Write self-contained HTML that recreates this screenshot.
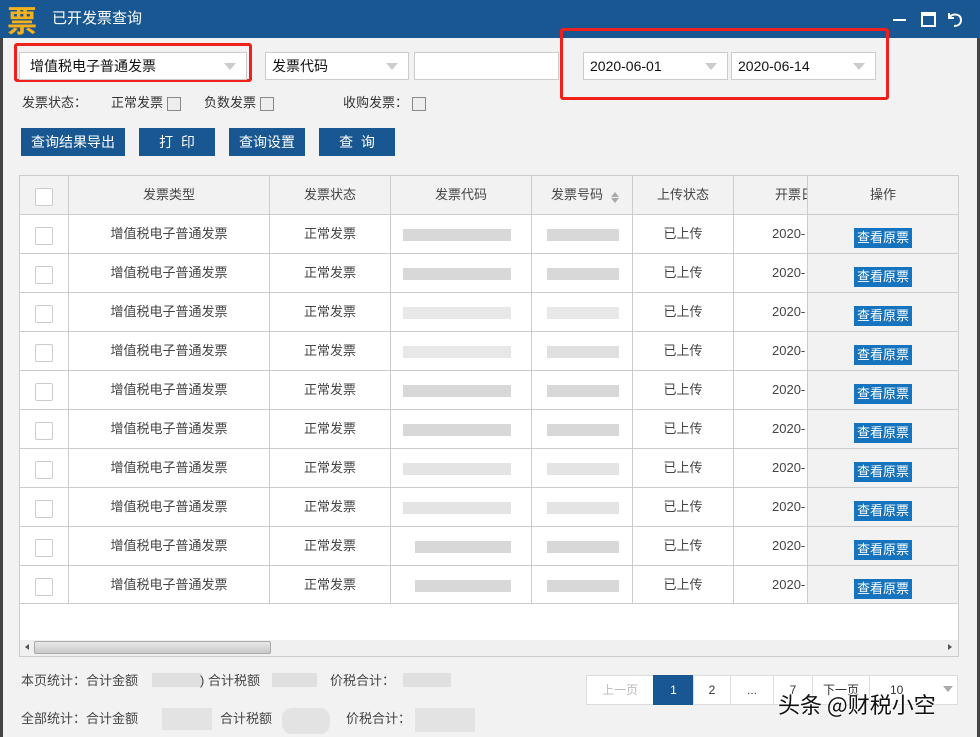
<!DOCTYPE html>
<html><head><meta charset="utf-8"><style>
*{margin:0;padding:0;box-sizing:border-box}
body{width:980px;height:737px;overflow:hidden;background:#f2f2f2;font-family:"Liberation Sans","Noto Sans CJK SC",sans-serif;font-size:13px;line-height:16px;color:#333;position:relative}
.a{position:absolute;white-space:nowrap}
.title{left:0;top:0;width:980px;height:38px;background:#185791}
.sel{background:#fff;border:1px solid #ccc;height:28px;font-size:14px;color:#111;padding-left:10px;line-height:26px}
.tri{position:absolute;right:10px;top:10px;width:0;height:0;border-left:6px solid transparent;border-right:6px solid transparent;border-top:7px solid #ccc}
.red{border:3px solid #f0201a;border-radius:3px}
.btn{background:#185791;color:#fff;height:28px;line-height:28px;text-align:center;font-size:14px}
.cb{width:14px;height:14px;border:1px solid #888;background:#eee}
.hl{background:#ccc}
.cell{text-align:center;font-size:13px;color:#444;line-height:16px}
.bl{background:#d8d8d8}
.vb{background:#1673bd;color:#fff;font-size:13px;width:58px;height:20px;line-height:20px;text-align:center}
.pg{background:#fff;border:1px solid #ddd;height:30px;line-height:28px;text-align:center;font-size:12px;color:#333}
.ck{width:18px;height:18px;border:1px solid #ccc;border-radius:2px;background:#fff}
</style></head><body>
<div class="a" style="left:0;top:0;width:3px;height:737px;background:#444"></div>
<div class="a" style="right:0;top:0;width:3px;height:737px;background:#444"></div>
<div class="a title"></div>
<div class="a" style="left:7px;top:1px;font-size:30px;font-weight:bold;color:#f5b01a;line-height:36px;font-family:'Noto Sans CJK SC',sans-serif">票</div>
<div class="a" style="left:52px;top:11px;color:#fff;font-size:15px">已开发票查询</div>
<div class="a" style="left:893px;top:19px;width:13px;height:2px;background:#fff"></div>
<div class="a" style="left:921px;top:12px;width:15px;height:15px;border:2px solid #fff;border-top-width:4px"></div>
<svg class="a" style="left:945px;top:9px" width="20" height="20" viewBox="0 0 20 20"><path d="M4 4v5h5M4 9C6 4 16 4 16 11c0 4-3 6-7 6" fill="none" stroke="#fff" stroke-width="2"/></svg>

<div class="a red" style="left:14px;top:43px;width:238px;height:39px"></div>
<div class="a sel" style="left:19px;top:52px;width:228px">增值税电子普通发票<span class="tri"></span></div>
<div class="a sel" style="left:265px;top:52px;width:144px;padding-left:6px">发票代码<span class="tri"></span></div>
<div class="a sel" style="left:414px;top:52px;width:145px"></div>
<div class="a red" style="left:560px;top:28px;width:329px;height:72px"></div>
<div class="a sel" style="left:583px;top:52px;width:145px;padding-left:6px">2020-06-01<span class="tri"></span></div>
<div class="a sel" style="left:731px;top:52px;width:145px;padding-left:6px">2020-06-14<span class="tri"></span></div>

<div class="a" style="left:22px;top:95px">发票状态：</div>
<div class="a" style="left:111px;top:95px">正常发票</div><div class="a cb" style="left:167px;top:97px"></div>
<div class="a" style="left:204px;top:95px">负数发票</div><div class="a cb" style="left:260px;top:97px"></div>
<div class="a" style="left:343px;top:95px">收购发票：</div><div class="a cb" style="left:412px;top:97px"></div>

<div class="a btn" style="left:21px;top:128px;width:104px">查询结果导出</div>
<div class="a btn" style="left:139px;top:128px;width:76px">打&nbsp;&nbsp;印</div>
<div class="a btn" style="left:229px;top:128px;width:76px">查询设置</div>
<div class="a btn" style="left:319px;top:128px;width:76px">查&nbsp;&nbsp;询</div>

<div class="a" style="left:19px;top:175px;width:940px;height:482px;background:#fff;border:1px solid #ccc"></div>
<div class="a" style="left:20px;top:176px;width:787px;height:38px;background:#f2f2f2"></div>
<div class="a" style="left:807px;top:176px;width:151px;height:428px;background:#f2f2f2"></div>
<div class="a" style="left:20px;top:603px;width:938px;height:1px;background:#ccc"></div>
<div class="a" style="left:20px;top:214px;width:938px;height:1px;background:#ccc"></div>
<div class="a hl" style="left:20px;top:253px;width:938px;height:1px"></div>
<div class="a hl" style="left:20px;top:292px;width:938px;height:1px"></div>
<div class="a hl" style="left:20px;top:331px;width:938px;height:1px"></div>
<div class="a hl" style="left:20px;top:370px;width:938px;height:1px"></div>
<div class="a hl" style="left:20px;top:409px;width:938px;height:1px"></div>
<div class="a hl" style="left:20px;top:448px;width:938px;height:1px"></div>
<div class="a hl" style="left:20px;top:487px;width:938px;height:1px"></div>
<div class="a hl" style="left:20px;top:526px;width:938px;height:1px"></div>
<div class="a hl" style="left:20px;top:565px;width:938px;height:1px"></div>
<div class="a hl" style="left:68px;top:176px;width:1px;height:428px"></div>
<div class="a hl" style="left:269px;top:176px;width:1px;height:428px"></div>
<div class="a hl" style="left:390px;top:176px;width:1px;height:428px"></div>
<div class="a hl" style="left:531px;top:176px;width:1px;height:428px"></div>
<div class="a hl" style="left:632px;top:176px;width:1px;height:428px"></div>
<div class="a hl" style="left:733px;top:176px;width:1px;height:428px"></div>
<div class="a hl" style="left:807px;top:176px;width:1px;height:428px"></div>

<div class="a ck" style="left:35px;top:188px"></div>
<div class="a cell" style="left:69px;top:187px;width:200px">发票类型</div>
<div class="a cell" style="left:270px;top:187px;width:120px">发票状态</div>
<div class="a cell" style="left:391px;top:187px;width:140px">发票代码</div>
<div class="a cell" style="left:532px;top:187px;width:90px">发票号码</div>
<div class="a" style="left:611px;top:192px;border:4px solid transparent;border-bottom:5px solid #aaa;border-top:0"></div>
<div class="a" style="left:611px;top:198px;border:4px solid transparent;border-top:5px solid #aaa;border-bottom:0"></div>
<div class="a cell" style="left:633px;top:187px;width:100px">上传状态</div>
<div class="a cell" style="left:775px;top:187px;width:32px;text-align:left;overflow:hidden">开票日</div>
<div class="a cell" style="left:808px;top:187px;width:150px">操作</div>

<div class="a ck" style="left:35px;top:227px"></div><div class="a cell" style="left:69px;top:226px;width:200px">增值税电子普通发票</div><div class="a cell" style="left:270px;top:226px;width:120px">正常发票</div><div class="a bl" style="left:403px;top:229px;width:108px;height:12px"></div><div class="a bl" style="left:547px;top:229px;width:72px;height:12px"></div><div class="a cell" style="left:633px;top:226px;width:100px">已上传</div><div class="a cell" style="left:772px;top:226px;text-align:left">2020-</div><div class="a vb" style="left:854px;top:228px">查看原票</div>
<div class="a ck" style="left:35px;top:266px"></div><div class="a cell" style="left:69px;top:265px;width:200px">增值税电子普通发票</div><div class="a cell" style="left:270px;top:265px;width:120px">正常发票</div><div class="a bl" style="left:403px;top:268px;width:108px;height:12px"></div><div class="a bl" style="left:547px;top:268px;width:72px;height:12px"></div><div class="a cell" style="left:633px;top:265px;width:100px">已上传</div><div class="a cell" style="left:772px;top:265px;text-align:left">2020-</div><div class="a vb" style="left:854px;top:267px">查看原票</div>
<div class="a ck" style="left:35px;top:305px"></div><div class="a cell" style="left:69px;top:304px;width:200px">增值税电子普通发票</div><div class="a cell" style="left:270px;top:304px;width:120px">正常发票</div><div class="a bl" style="left:403px;top:307px;width:108px;height:12px;opacity:.6"></div><div class="a bl" style="left:547px;top:307px;width:72px;height:12px;opacity:.6"></div><div class="a cell" style="left:633px;top:304px;width:100px">已上传</div><div class="a cell" style="left:772px;top:304px;text-align:left">2020-</div><div class="a vb" style="left:854px;top:306px">查看原票</div>
<div class="a ck" style="left:35px;top:344px"></div><div class="a cell" style="left:69px;top:343px;width:200px">增值税电子普通发票</div><div class="a cell" style="left:270px;top:343px;width:120px">正常发票</div><div class="a bl" style="left:403px;top:346px;width:108px;height:12px;opacity:.6"></div><div class="a bl" style="left:547px;top:346px;width:72px;height:12px;opacity:.8"></div><div class="a cell" style="left:633px;top:343px;width:100px">已上传</div><div class="a cell" style="left:772px;top:343px;text-align:left">2020-</div><div class="a vb" style="left:854px;top:345px">查看原票</div>
<div class="a ck" style="left:35px;top:383px"></div><div class="a cell" style="left:69px;top:382px;width:200px">增值税电子普通发票</div><div class="a cell" style="left:270px;top:382px;width:120px">正常发票</div><div class="a bl" style="left:403px;top:385px;width:108px;height:12px"></div><div class="a bl" style="left:547px;top:385px;width:72px;height:12px"></div><div class="a cell" style="left:633px;top:382px;width:100px">已上传</div><div class="a cell" style="left:772px;top:382px;text-align:left">2020-</div><div class="a vb" style="left:854px;top:384px">查看原票</div>
<div class="a ck" style="left:35px;top:422px"></div><div class="a cell" style="left:69px;top:421px;width:200px">增值税电子普通发票</div><div class="a cell" style="left:270px;top:421px;width:120px">正常发票</div><div class="a bl" style="left:403px;top:424px;width:108px;height:12px"></div><div class="a bl" style="left:547px;top:424px;width:72px;height:12px"></div><div class="a cell" style="left:633px;top:421px;width:100px">已上传</div><div class="a cell" style="left:772px;top:421px;text-align:left">2020-</div><div class="a vb" style="left:854px;top:423px">查看原票</div>
<div class="a ck" style="left:35px;top:461px"></div><div class="a cell" style="left:69px;top:460px;width:200px">增值税电子普通发票</div><div class="a cell" style="left:270px;top:460px;width:120px">正常发票</div><div class="a bl" style="left:403px;top:463px;width:108px;height:12px;opacity:.7"></div><div class="a bl" style="left:547px;top:463px;width:72px;height:12px;opacity:.7"></div><div class="a cell" style="left:633px;top:460px;width:100px">已上传</div><div class="a cell" style="left:772px;top:460px;text-align:left">2020-</div><div class="a vb" style="left:854px;top:462px">查看原票</div>
<div class="a ck" style="left:35px;top:500px"></div><div class="a cell" style="left:69px;top:499px;width:200px">增值税电子普通发票</div><div class="a cell" style="left:270px;top:499px;width:120px">正常发票</div><div class="a bl" style="left:403px;top:502px;width:108px;height:12px;opacity:.7"></div><div class="a bl" style="left:547px;top:502px;width:72px;height:12px;opacity:.7"></div><div class="a cell" style="left:633px;top:499px;width:100px">已上传</div><div class="a cell" style="left:772px;top:499px;text-align:left">2020-</div><div class="a vb" style="left:854px;top:501px">查看原票</div>
<div class="a ck" style="left:35px;top:539px"></div><div class="a cell" style="left:69px;top:538px;width:200px">增值税电子普通发票</div><div class="a cell" style="left:270px;top:538px;width:120px">正常发票</div><div class="a bl" style="left:415px;top:541px;width:96px;height:12px"></div><div class="a bl" style="left:547px;top:541px;width:72px;height:12px"></div><div class="a cell" style="left:633px;top:538px;width:100px">已上传</div><div class="a cell" style="left:772px;top:538px;text-align:left">2020-</div><div class="a vb" style="left:854px;top:540px">查看原票</div>
<div class="a ck" style="left:35px;top:578px"></div><div class="a cell" style="left:69px;top:577px;width:200px">增值税电子普通发票</div><div class="a cell" style="left:270px;top:577px;width:120px">正常发票</div><div class="a bl" style="left:415px;top:580px;width:96px;height:12px"></div><div class="a bl" style="left:547px;top:580px;width:72px;height:12px"></div><div class="a cell" style="left:633px;top:577px;width:100px">已上传</div><div class="a cell" style="left:772px;top:577px;text-align:left">2020-</div><div class="a vb" style="left:854px;top:579px">查看原票</div>

<div class="a" style="left:20px;top:640px;width:938px;height:16px;background:#f0f0f0"></div>
<div class="a" style="left:34px;top:641px;width:237px;height:13px;background:linear-gradient(#e8e8e8,#c8c8c8);border:1px solid #aaa;border-radius:2px"></div>
<div class="a" style="left:25px;top:644px;border:3px solid transparent;border-right:4px solid #555;border-left:0"></div>
<div class="a" style="left:948px;top:644px;border:3px solid transparent;border-left:4px solid #555;border-right:0"></div>

<div class="a" style="left:21px;top:673px;color:#444">本页统计：合计金额</div>
<div class="a bl" style="left:152px;top:673px;width:50px;height:14px;opacity:.7"></div>
<div class="a" style="left:200px;top:673px;color:#444">) 合计税额</div>
<div class="a bl" style="left:272px;top:673px;width:45px;height:14px;opacity:.7"></div>
<div class="a" style="left:330px;top:673px;color:#444">价税合计：</div>
<div class="a bl" style="left:403px;top:673px;width:48px;height:14px;opacity:.7"></div>
<div class="a" style="left:21px;top:711px;color:#444">全部统计：合计金额</div>
<div class="a bl" style="left:162px;top:708px;width:50px;height:22px;opacity:.6"></div>
<div class="a" style="left:220px;top:711px;color:#444">合计税额</div>
<div class="a bl" style="left:282px;top:708px;width:48px;height:26px;opacity:.6;border-radius:10px"></div>
<div class="a" style="left:346px;top:711px;color:#444">价税合计：</div>
<div class="a bl" style="left:415px;top:708px;width:60px;height:24px;opacity:.6"></div>

<div class="a pg" style="left:586px;top:675px;width:68px;color:#bbb">上一页</div>
<div class="a pg" style="left:653px;top:675px;width:41px;background:#185791;color:#fff;border-color:#185791">1</div>
<div class="a pg" style="left:693px;top:675px;width:38px">2</div>
<div class="a pg" style="left:730px;top:675px;width:44px">...</div>
<div class="a pg" style="left:773px;top:675px;width:40px">7</div>
<div class="a pg" style="left:812px;top:675px;width:58px">下一页</div>
<div class="a pg" style="left:869px;top:675px;width:89px;text-align:left;padding-left:20px">10</div>
<div class="a" style="left:943px;top:686px;border:5px solid transparent;border-top:6px solid #aaa"></div>
<div class="a" style="left:778px;top:689px;font-size:22px;line-height:30px;color:#111;font-family:'Noto Sans CJK SC',sans-serif;text-shadow:0 0 2px #fff,0 0 2px #fff,0 0 3px #fff">头条 @财税小空</div>
</body></html>
